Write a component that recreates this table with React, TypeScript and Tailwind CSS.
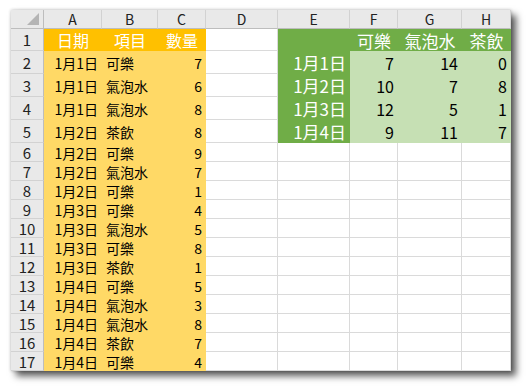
const cols = ['A', 'B', 'C', 'D', 'E', 'F', 'G', 'H']

const orders: [string, string, number][] = [
  ['1月1日', '可樂', 7],
  ['1月1日', '氣泡水', 6],
  ['1月1日', '氣泡水', 8],
  ['1月2日', '茶飲', 8],
  ['1月2日', '可樂', 9],
  ['1月2日', '氣泡水', 7],
  ['1月2日', '可樂', 1],
  ['1月3日', '可樂', 4],
  ['1月3日', '氣泡水', 5],
  ['1月3日', '可樂', 8],
  ['1月3日', '茶飲', 1],
  ['1月4日', '可樂', 5],
  ['1月4日', '氣泡水', 3],
  ['1月4日', '氣泡水', 8],
  ['1月4日', '茶飲', 7],
  ['1月4日', '可樂', 4],
]

const pivot: [string, number, number, number][] = [
  ['1月1日', 7, 14, 0],
  ['1月2日', 10, 7, 8],
  ['1月3日', 12, 5, 1],
  ['1月4日', 9, 11, 7],
]

type Cell = { text?: string | number; fill: string; align: string; size: string }

const WHITE = 'bg-white border-r border-b border-[#dadada] text-black'
const ORANGE = 'bg-[#ffc000] text-white'
const LIGHT_ORANGE = 'bg-[#ffd966] text-black'
const GREEN = 'bg-[#70ad47] text-white'
const LIGHT_GREEN = 'bg-[#c6e0b4] text-black'

function buildRows(): Cell[][] {
  const rows: Cell[][] = []
  rows.push([
    { text: '日期', fill: ORANGE, align: 'justify-center', size: 'text-[16px]' },
    { text: '項目', fill: ORANGE, align: 'justify-center', size: 'text-[16px]' },
    { text: '數量', fill: ORANGE, align: 'justify-center', size: 'text-[16px]' },
    { fill: WHITE, align: '', size: '' },
    { fill: GREEN, align: '', size: '' },
    { text: '可樂', fill: GREEN, align: 'justify-center', size: 'text-[17px]' },
    { text: '氣泡水', fill: GREEN, align: 'justify-center', size: 'text-[17px]' },
    { text: '茶飲', fill: GREEN, align: 'justify-center', size: 'text-[17px]' },
  ])
  orders.forEach(([date, item, qty], i) => {
    const row: Cell[] = [
      { text: date, fill: LIGHT_ORANGE, align: 'justify-end', size: 'text-[14px]' },
      { text: item, fill: LIGHT_ORANGE, align: 'justify-start', size: 'text-[14px]' },
      { text: qty, fill: LIGHT_ORANGE, align: 'justify-end', size: 'text-[14px]' },
      { fill: WHITE, align: '', size: '' },
    ]
    const p = pivot[i]
    if (p) {
      row.push({ text: p[0], fill: GREEN, align: 'justify-end', size: 'text-[17px]' })
      row.push({ text: p[1], fill: LIGHT_GREEN, align: 'justify-end', size: 'text-[16px]' })
      row.push({ text: p[2], fill: LIGHT_GREEN, align: 'justify-end', size: 'text-[16px]' })
      row.push({ text: p[3], fill: LIGHT_GREEN, align: 'justify-end', size: 'text-[16px]' })
    } else {
      row.push({ fill: WHITE, align: '', size: '' })
      row.push({ fill: WHITE, align: '', size: '' })
      row.push({ fill: WHITE, align: '', size: '' })
      row.push({ fill: WHITE, align: '', size: '' })
    }
    rows.push(row)
  })
  return rows
}

export default function App() {
  const rows = buildRows()

  return (
    <div
      className="w-[529px] h-[390px] bg-white pt-[10px] pl-[11px] overflow-hidden"
      style={{ fontFamily: '"Noto Sans CJK TC", "Noto Sans", sans-serif' }}
    >
      <div className="w-[500px] grid grid-cols-[33px_58px_56px_48px_72px_72px_48px_64px_49px] grid-rows-[19px_22px_23px_23px_23px_23px_repeat(12,19px)] bg-white shadow-[5px_5px_7px_rgba(0,0,0,0.65),0_0_3px_rgba(0,0,0,0.25)]">

        {/* corner */}
        <div className="relative bg-[#e9e9e9] border-r border-b border-[#bdbdbd]">
          <div className="absolute right-[4px] bottom-[3px] w-0 h-0 border-l-[12px] border-l-transparent border-b-[12px] border-b-[#b4b4b4]" />
        </div>

        {cols.map(c => (
          <div
            key={c}
            className="flex items-center justify-center bg-[#e9e9e9] border-r border-b border-r-[#d2d2d2] border-b-[#bdbdbd] text-[14px] leading-none text-[#222]"
          >
            {c}
          </div>
        ))}

        {rows.map((row, r) => (
          <div key={r} className="contents">
            <div className="flex items-center justify-center bg-[#e9e9e9] border-r border-b border-r-[#bdbdbd] border-b-[#d2d2d2] text-[15px] leading-none text-[#222]">
              {r + 1}
            </div>
            {row.map((cell, c) => (
              <div
                key={c}
                className={`flex items-center px-[4px] leading-none whitespace-nowrap ${cell.fill} ${cell.align} ${cell.size}`}
              >
                {cell.text}
              </div>
            ))}
          </div>
        ))}
      </div>
    </div>
  )
}
